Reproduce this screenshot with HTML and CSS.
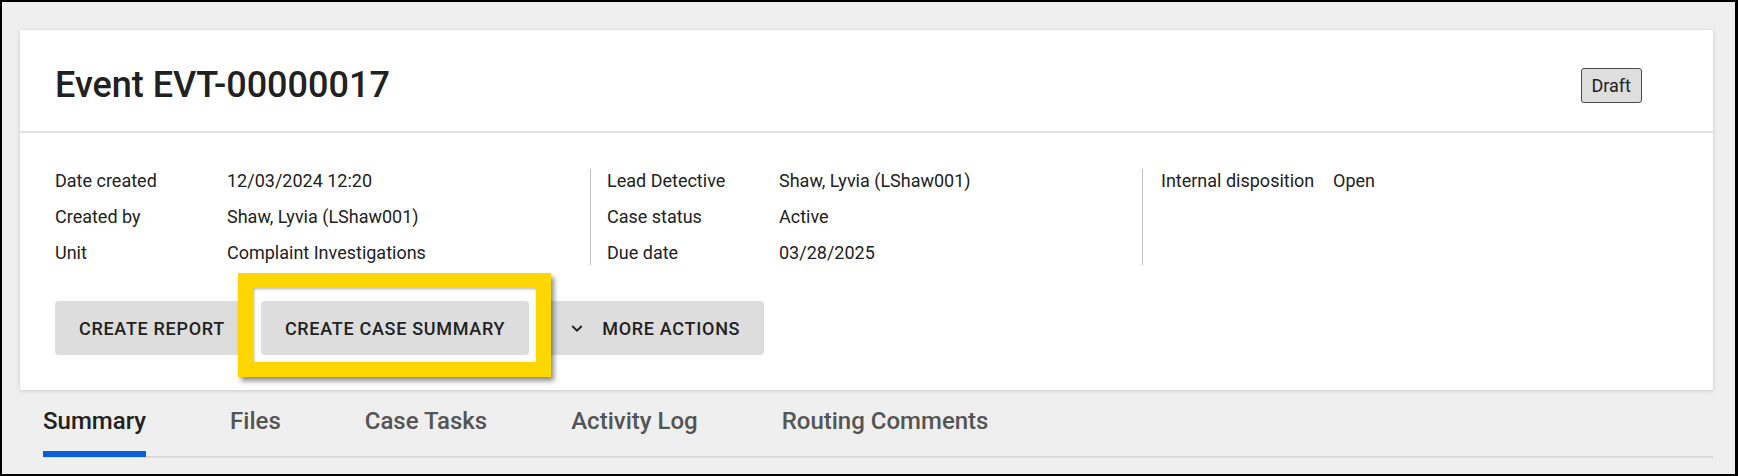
FILE: index.html
```html
<!DOCTYPE html>
<html lang="en">
<head>
<meta charset="utf-8">
<title>Event EVT-00000017</title>
<link rel="stylesheet" href="styles.css">
</head>
<body>
<div class="frame">
  <section class="card">
    <header class="card-header">
      <h1 class="title">Event EVT-00000017</h1>
      <span class="badge">Draft</span>
    </header>
    <div class="card-body">
      <div class="details">
        <dl class="col">
          <dt>Date created</dt><dd>12/03/2024 12:20</dd>
          <dt>Created by</dt><dd>Shaw, Lyvia (LShaw001)</dd>
          <dt>Unit</dt><dd>Complaint Investigations</dd>
        </dl>
        <dl class="col col-sep">
          <dt>Lead Detective</dt><dd>Shaw, Lyvia (LShaw001)</dd>
          <dt>Case status</dt><dd>Active</dd>
          <dt>Due date</dt><dd>03/28/2025</dd>
        </dl>
        <dl class="col col-sep col-last">
          <dt>Internal disposition</dt><dd>Open</dd>
        </dl>
      </div>
      <div class="actions">
        <button class="btn">Create report</button>
        <button class="btn btn-highlighted">Create case summary<span class="highlight-frame"></span></button>
        <button class="btn btn-menu"><svg class="chev" width="24" height="24" viewBox="0 0 24 24"><path d="M7.3 10 L12 14.6 L16.7 10" fill="none" stroke="#222" stroke-width="2"/></svg>More actions</button>
      </div>
    </div>
  </section>
  <nav class="tabs">
    <a class="tab active">Summary</a>
    <a class="tab">Files</a>
    <a class="tab">Case Tasks</a>
    <a class="tab">Activity Log</a>
    <a class="tab">Routing Comments</a>
  </nav>
</div>
</body>
</html>
```
FILE: styles.css
```css
* { box-sizing: border-box; }
html, body { margin: 0; padding: 0; }
body { font-family: Roboto, "Liberation Sans", sans-serif; color: #222; }

.frame {
  width: 1738px;
  height: 476px;
  border-style: solid;
  border-color: #000;
  border-width: 2px 3px 2px 2px;
  background: #efefef;
  overflow: hidden;
  padding-top: 28px;
}

.card {
  margin: 0 22px 0 18px;
  background: #fff;
  border-radius: 2px;
  box-shadow: 0 1px 4px rgba(0,0,0,0.16);
}

.card-header {
  display: flex;
  align-items: center;
  justify-content: space-between;
  padding: 34px 71px 25px 35px;
  border-bottom: 2px solid #e2e2e2;
}

.title {
  margin: 0;
  font-size: 36px;
  line-height: 42px;
  font-weight: 500;
  color: #212121;
}

.badge {
  display: inline-block;
  height: 35px;
  padding: 0 10px;
  line-height: 33px;
  font-size: 18px;
  color: #222;
  background: #dedede;
  border: 1px solid #4a4a4a;
  border-radius: 3px;
}

.card-body {
  padding: 36px 35px 35px 35px;
}

.details {
  display: grid;
  grid-template-columns: 535px 552px 1fr;
}

.col {
  margin: 0;
  display: grid;
  grid-template-columns: 172px 1fr;
  grid-auto-rows: 24px;
  row-gap: 12px;
  align-content: start;
  font-size: 18px;
  line-height: 24px;
}

.col dt, .col dd { margin: 0; white-space: nowrap; }

.col-sep {
  border-left: 1px solid #c6c6c6;
  padding-left: 16px;
  min-height: 96px;
}
.col-last { padding-left: 18px; }

.actions {
  display: flex;
  gap: 12px;
  margin-top: 36px;
}

.btn {
  position: relative;
  display: inline-flex;
  align-items: center;
  height: 54px;
  padding: 0 24px;
  border: 0;
  border-radius: 4px;
  background: #dddddd;
  color: #222;
  font-family: Roboto, "Liberation Sans", sans-serif;
  font-size: 18px;
  font-weight: 500;
  letter-spacing: 0.7px;
  text-transform: uppercase;
}

.btn-highlighted { z-index: 1; }

.chev { margin-right: 13px; flex: none; }

.highlight-frame {
  position: absolute;
  left: -23px;
  top: -28px;
  right: -22px;
  bottom: -22px;
  border: 15px solid #ffd600;
  box-shadow: 3px 4px 5px rgba(0,0,0,0.45), inset 1px 1px 3px rgba(0,0,0,0.3);
  pointer-events: none;
}

.tabs {
  display: flex;
  gap: 84px;
  margin: 17px 22px 0 41px;
  border-bottom: 2px solid #dadada;
}

.tab {
  display: block;
  font-size: 24px;
  line-height: 28px;
  font-weight: 500;
  color: #555;
  padding-bottom: 16px;
  border-bottom: 6px solid transparent;
  margin-bottom: -1px;
}

.tab.active {
  color: #222;
  border-bottom-color: #0a5fd6;
}
```
